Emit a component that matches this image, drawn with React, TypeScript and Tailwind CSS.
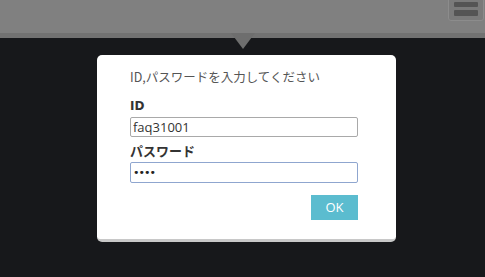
import React from "react";

const jp = { fontFamily: '"Noto Sans CJK JP", "Noto Sans", sans-serif' };

export default function App() {
  return (
    <div className="relative w-[485px] h-[277px] overflow-hidden bg-[#17181b] flex flex-col" style={jp}>
      {/* top bar */}
      <header className="h-[38px] bg-[#808080] border-b-[5px] border-[#727272] flex justify-end shrink-0">
        <div className="w-[36px] h-[22px] -mt-[1px] mr-[1px] rounded-b-[3px] border border-[#8c8c8c] bg-[#7a7a7a] flex flex-col gap-[3px] px-[5px] pt-[2px]">
          <div className="h-[5px] rounded-[1px] bg-[#545454]" />
          <div className="h-[6px] rounded-[1px] bg-[#545454]" />
        </div>
      </header>

      {/* pointer arrow */}
      <div className="absolute left-[231px] top-[33px] w-0 h-0 border-l-[12px] border-r-[12px] border-t-[16px] border-l-transparent border-r-transparent border-t-[#6e6e6e]" />

      {/* dialog */}
      <div className="ml-[97px] mt-[17px] w-[299px] h-[187px] bg-white rounded-[5px] border-b-[3px] border-[#c8c8c8] pl-[33px] pr-[38px] pt-[13px]">
        <p className="text-[12.5px] leading-[18px] text-[#555]">ID,パスワードを入力してください</p>

        <label className="block mt-[12px] text-[12px] leading-[16px] font-bold text-[#333]" style={{ fontFamily: '"DejaVu Sans", sans-serif' }}>
          ID
        </label>
        <input
          readOnly
          value="faq31001"
          className="block mt-[3px] w-[228px] h-[20px] border border-[#a9a9a9] rounded-[2px] px-[2px] text-[13px] text-[#333] outline-none"
          style={{ fontFamily: '"Open Sans", "Noto Sans", sans-serif' }}
        />

        <label className="block mt-[5px] text-[13px] leading-[18px] font-bold text-[#333]">パスワード</label>
        <input
          readOnly
          type="password"
          value="aaaa"
          className="block mt-[2px] w-[228px] h-[21px] border-[1.5px] border-[#8fa6cf] rounded-[2px] px-[2px] text-[11px] text-[#222] outline-none"
          style={{ fontFamily: '"DejaVu Sans", sans-serif', letterSpacing: "-1px" }}
        />

        <div className="flex justify-end mt-[12px]">
          <button
            className="w-[47px] h-[25px] bg-[#5bbccf] text-white text-[13px] leading-none"
            style={{ fontFamily: '"Open Sans", "Noto Sans", sans-serif' }}
          >
            OK
          </button>
        </div>
      </div>
    </div>
  );
}
